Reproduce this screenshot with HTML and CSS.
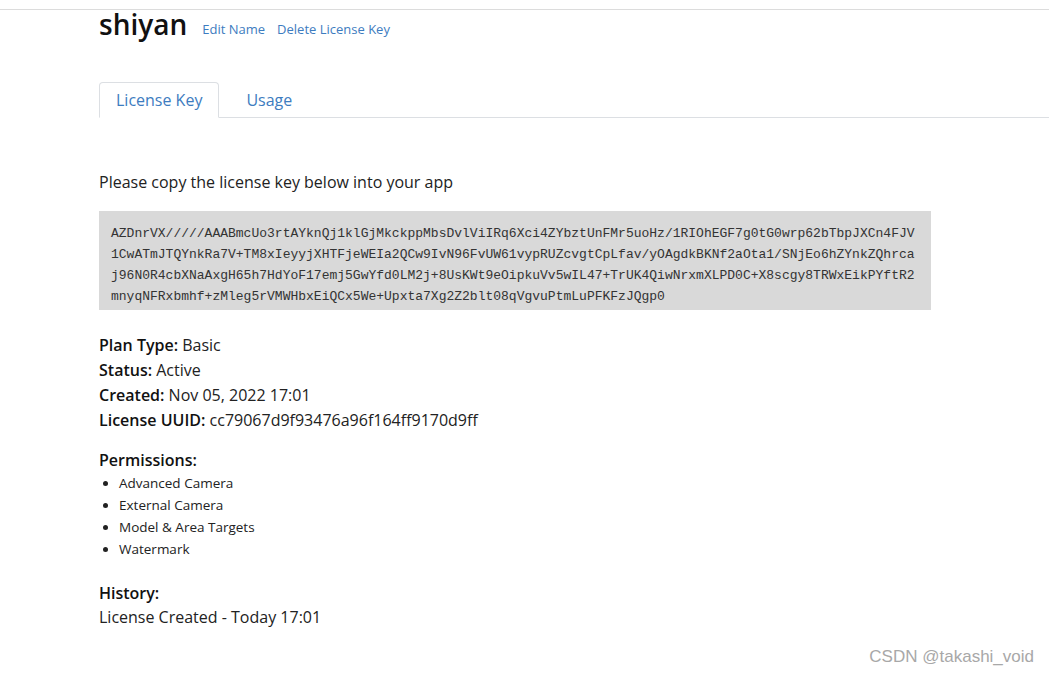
FILE: index.html
```html
<!DOCTYPE html>
<html>
<head>
<meta charset="utf-8">
<link rel="stylesheet" href="styles.css">
</head>
<body>
<div class="topbar"></div>
<div class="container">
  <div class="title-row">
    <h1 class="title">shiyan</h1>
    <a class="action" href="#">Edit Name</a>
    <a class="action" href="#">Delete License Key</a>
  </div>
  <ul class="tabs">
    <li class="tab active"><a href="#">License Key</a></li>
    <li class="tab"><a href="#">Usage</a></li>
  </ul>
  <p class="intro">Please copy the license key below into your app</p>
  <pre class="key">AZDnrVX/////AAABmcUo3rtAYknQj1klGjMkckppMbsDvlViIRq6Xci4ZYbztUnFMr5uoHz/1RIOhEGF7g0tG0wrp62bTbpJXCn4FJV1CwATmJTQYnkRa7V+TM8xIeyyjXHTFjeWEIa2QCw9IvN96FvUW61vypRUZcvgtCpLfav/yOAgdkBKNf2aOta1/SNjEo6hZYnkZQhrcaj96N0R4cbXNaAxgH65h7HdYoF17emj5GwYfd0LM2j+8UsKWt9eOipkuVv5wIL47+TrUK4QiwNrxmXLPD0C+X8scgy8TRWxEikPYftR2mnyqNFRxbmhf+zMleg5rVMWHbxEiQCx5We+Upxta7Xg2Z2blt08qVgvuPtmLuPFKFzJQgp0</pre>
  <div class="details">
    <div class="row"><b>Plan Type:</b> Basic</div>
    <div class="row"><b>Status:</b> Active</div>
    <div class="row"><b>Created:</b> Nov 05, 2022 17:01</div>
    <div class="row"><b>License UUID:</b> cc79067d9f93476a96f164ff9170d9ff</div>
  </div>
  <div class="section-title">Permissions:</div>
  <ul class="perms">
    <li>Advanced Camera</li>
    <li>External Camera</li>
    <li>Model &amp; Area Targets</li>
    <li>Watermark</li>
  </ul>
  <div class="section-title history">History:</div>
  <div class="row">License Created - Today 17:01</div>
</div>
<div class="watermark">CSDN @takashi_void</div>
</body>
</html>
```
FILE: styles.css
```css
html, body {
  margin: 0;
  padding: 0;
  background: #fff;
}
body {
  font-family: "Open Sans", "Noto Sans", sans-serif;
  color: #222;
  width: 1049px;
  height: 675px;
  overflow: hidden;
  position: relative;
}
.topbar {
  height: 9px;
  border-bottom: 1px solid #dcdcdc;
}
.container {
  padding-left: 99px;
}
.title-row {
  display: flex;
  align-items: baseline;
  height: 76px;
  margin-top: -4px;
}
.title {
  font-size: 28px;
  font-weight: 600;
  margin: 0 15px 0 0;
  line-height: 36px;
  color: #111;
}
.action {
  font-size: 13px;
  color: #3d7cc0;
  text-decoration: none;
  margin-right: 12px;
  position: relative;
  top: -1px;
}
.tabs {
  list-style: none;
  margin: 0;
  padding: 0;
  display: flex;
  border-bottom: 1px solid #dcdfe3;
}
.tab {
  margin-bottom: -1px;
}
.tab a {
  display: block;
  font-size: 16px;
  line-height: 22px;
  padding: 6px 16px;
  color: #3d7cc0;
  text-decoration: none;
  border: 1px solid transparent;
  border-radius: 4px 4px 0 0;
  margin-right: 10px;
}
.tab.active a {
  border-color: #dcdfe3;
  border-bottom-color: #fff;
  background: #fff;
}
.intro {
  font-size: 16px;
  line-height: 24px;
  margin: 52px 0 17px 0;
}
.key {
  box-sizing: border-box;
  width: 832px;
  margin: 0;
  background: #d9d9d9;
  font-family: "Liberation Mono", "Courier New", monospace;
  font-size: 13px;
  line-height: 21px;
  color: #333;
  padding: 12px 12px 3px 12px;
  white-space: pre-wrap;
  word-break: break-all;
}
.details {
  margin-top: 23px;
}
.row {
  font-size: 16px;
  line-height: 25px;
}
.row b, .section-title {
  font-weight: 600;
  color: #111;
}
.section-title {
  font-size: 16px;
  line-height: 24px;
  margin-top: 15px;
}
.perms {
  margin: 0;
  padding-left: 20px;
  font-size: 13.5px;
  line-height: 22px;
}
.section-title.history {
  margin-top: 21px;
}
.watermark {
  position: absolute;
  right: 15px;
  bottom: 8px;
  font-family: "Liberation Sans", Arial, sans-serif;
  font-size: 17px;
  color: #a8a8a8;
}
```
